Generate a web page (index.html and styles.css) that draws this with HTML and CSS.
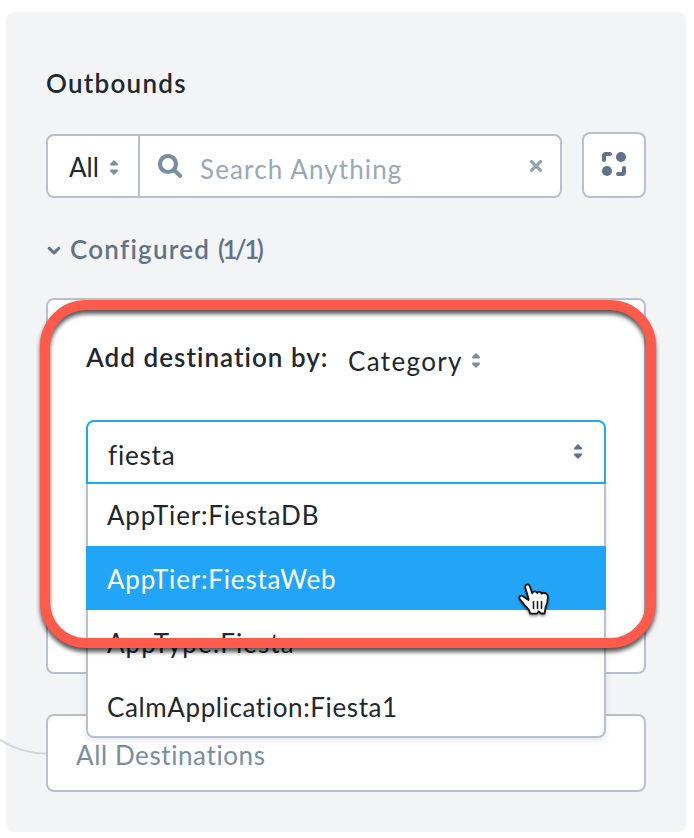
FILE: index.html
```html
<!DOCTYPE html>
<html lang="en">
<head>
<meta charset="utf-8">
<title>Outbounds</title>
<link rel="stylesheet" href="styles.css">
</head>
<body>
<svg class="defs" width="0" height="0" aria-hidden="true">
  <symbol id="sort" viewBox="0 0 8 15"><path d="M4 0 7.8 3.7Q8.4 5.5 7 5.5H1Q-.4 5.5.2 3.7ZM4 15 .2 11.3Q-.4 9.5 1 9.5H7Q8.4 9.5 7.8 11.3Z"/></symbol>
</svg>
<main class="panel">
  <svg class="connector" width="46" height="20" viewBox="0 0 46 20"><path d="M-2 3.5C12 13 26 18.5 46 18.5"/></svg>
  <h1 class="title"><span class="t-title">Outbounds</span></h1>
  <div class="toolbar">
    <div class="search">
      <div class="scope"><span class="t-all">All</span><svg class="sort"><use href="#sort"/></svg></div>
      <div class="field">
        <svg class="magnifier" width="24" height="24" viewBox="0 0 24 24"><circle cx="10" cy="10" r="8"/><path d="M16 16 22 21.8"/></svg>
        <span class="placeholder t-search">Search Anything</span>
        <svg class="clear" width="12" height="12" viewBox="0 0 12 12"><path d="M1.6 1.6 10.4 10.4M10.4 1.6 1.6 10.4"/></svg>
      </div>
    </div>
    <div class="layout-button">
      <svg width="24" height="24" viewBox="0 0 24 24"><circle cx="19" cy="5" r="5"/><circle cx="5" cy="19" r="5"/><path d="M0 8V4Q0 0 4 0H8Q10 0 10 2T8 4H4V8Q4 10 2 10T0 8ZM24 16V20Q24 24 20 24H16Q14 24 14 22T16 20H20V16Q20 14 22 14T24 16Z"/></svg>
    </div>
  </div>
  <div class="section">
    <svg width="14" height="10" viewBox="0 0 14 10"><path d="M2.2 2.2 7 7 11.8 2.2"/></svg>
    <span class="t-conf">Configured <span class="count">(1/1)</span></span>
  </div>
  <section class="card editor">
    <div class="by">
      <span class="label t-add">Add destination by:</span>
      <span class="category t-cat">Category</span>
      <svg class="sort"><use href="#sort"/></svg>
    </div>
    <div class="combo">
      <div class="input"><span class="t-fiesta">fiesta</span><svg class="sort dark"><use href="#sort"/></svg></div>
      <div class="menu">
        <div class="item"><span class="t-db">AppTier:FiestaDB</span></div>
        <div class="item active"><span class="t-web">AppTier:FiestaWeb</span></div>
        <div class="item"><span class="t-type">AppType:Fiesta</span></div>
        <div class="item"><span class="t-calm">CalmApplication:Fiesta1</span></div>
      </div>
    </div>
    <div class="highlight"></div>
    <svg class="pointer" width="36" height="38" viewBox="0 0 36 38">
      <path class="hand" d="M11.5 18.5 8.4 8C7.3 4.4 11.6 3 12.8 6.2L15.3 13.2C16 10.8 19.3 10.8 20.2 13 21.4 11 24 11.4 24.8 13.8 26.4 11.8 30.8 13 30.8 16.5 31 21 30.6 23.5 28.5 27.5L27.7 33.5H23.8L21.8 31.3 20 33.7H13.2C12.8 29.5 10.2 28.2 7.7 25.3 6 23.4 4.8 21.5 2.9 19.2 1 16.8 3.9 14.6 6.4 16.4L11.5 20Z"/>
      <path class="lines" d="M16.5 21V29M20.5 21V29M24.5 21V29"/>
    </svg>
  </section>
  <section class="card all"><span class="t-dest">All Destinations</span></section>
</main>
</body>
</html>
```
FILE: styles.css
```css
* { box-sizing: border-box; }
body {
  margin: 0;
  height: 838px;
  padding-top: 12px;
  overflow: hidden;
  background: #fff;
  font: 400 26px/34px Lato, "Liberation Sans", sans-serif;
  color: #22272e;
  font-variant-ligatures: none;
}
svg { display: block; flex: none; }
.defs { position: absolute; }
span { white-space: nowrap; }
.t-title { letter-spacing: 1.25px; }
.t-search { letter-spacing: 1.13px; }
.t-conf { letter-spacing: 1.25px; }
.t-add { letter-spacing: 1.03px; }
.t-cat { letter-spacing: 1.35px; }
.t-fiesta { letter-spacing: .8px; }
.t-db, .t-web { letter-spacing: .82px; }
.t-type { letter-spacing: 1.05px; }
.t-calm { letter-spacing: .62px; }
.t-dest { letter-spacing: .6px; }
.count { letter-spacing: -2.6px; }
.panel {
  position: relative;
  width: 680px;
  height: 820px;
  margin-left: 6px;
  padding: 54px 40px 40px;
  border-radius: 8px;
  background: #f2f4f6;
}
.connector { position: absolute; left: -6px; top: 723px; fill: none; stroke: #d1d6db; stroke-width: 2; }
.title { height: 32px; margin: 0; font-size: 26px; font-weight: 600; }
.toolbar { display: flex; align-items: flex-end; gap: 20px; margin-top: 34px; }
.search {
  display: flex;
  width: 516px;
  height: 64px;
  border: 2px solid #b8bfcd;
  border-radius: 8px;
  background: #fff;
}
.scope { display: flex; width: 92px; padding: 14px 0 0 21px; border-right: 2px solid #b8bfcd; }
.scope .t-all { width: 41px; }
.scope .sort { margin-top: 10px; }
.sort { width: 8px; height: 15px; fill: #7b8da1; }
.sort.dark { fill: #5f6f85; }
.field { display: flex; flex: 1; padding: 16px 18px 0; }
.magnifier { margin-top: 2px; fill: none; stroke: #7b8da1; stroke-width: 4.2; stroke-linecap: round; }
.placeholder { flex: 1; margin-left: 18px; color: #9aa7b7; }
.clear { margin-top: 8px; fill: none; stroke: #94a1b2; stroke-width: 3.2; stroke-linecap: round; }
.layout-button {
  display: flex;
  justify-content: center;
  width: 64px;
  height: 66px;
  padding-top: 18px;
  border: 2px solid #b8bfcd;
  border-radius: 8px;
  background: #fff;
  fill: #627288;
}
.section { display: flex; height: 32px; margin-top: 34px; gap: 9px; color: #627288; font-weight: 600; }
.section svg { margin: 14px 0 0 1px; fill: none; stroke: #627288; stroke-width: 3; stroke-linecap: round; stroke-linejoin: round; }
.card { position: relative; border: 2px solid #b8bfcd; border-radius: 8px; background: #fff; }
.editor { height: 376px; margin-top: 34px; padding: 40px 38px; z-index: 1; }
.by { display: flex; height: 36px; }
.label { width: 262px; font-weight: 600; }
.category { width: 124px; margin-top: 4px; }
.by .sort { margin-top: 13px; }
.combo { width: 520px; margin-top: 44px; }
.input {
  position: relative;
  z-index: 1;
  display: flex;
  justify-content: space-between;
  height: 64px;
  padding: 16px 22px 0 20px;
  border: 2px solid #22a5f7;
  border-radius: 8px 8px 0 0;
  background: #fff;
}
.input .sort { margin-top: 6px; }
.menu {
  height: 256px;
  margin-top: -2px;
  border: solid #b8bfcd;
  border-width: 0 2px 2px;
  border-radius: 0 0 8px 8px;
  background: #fff;
  box-shadow: 0 3px 6px rgba(60, 75, 95, .12);
}
.item { height: 64px; padding: 16px 18px 0 19px; }
.item.active { margin: 0 -2px; padding-left: 21px; background: #22a5f7; color: #fff; }
.highlight {
  position: absolute;
  left: -8px;
  top: 0;
  width: 616px;
  height: 348px;
  border: 10px solid #ff5a4b;
  border-radius: 46px;
  filter: drop-shadow(0 4px 2px rgba(0, 0, 0, .65));
}
.pointer { position: absolute; left: 469px; top: 280px; filter: drop-shadow(0 2px 1px rgba(0, 0, 0, .35)); }
.hand { fill: #fff; stroke: #111; stroke-width: 1.8; stroke-linejoin: round; }
.lines { fill: none; stroke: #111; stroke-width: 1.5; }
.all { height: 78px; margin-top: 40px; padding: 22px 28px; color: #7b8da1; }
```
